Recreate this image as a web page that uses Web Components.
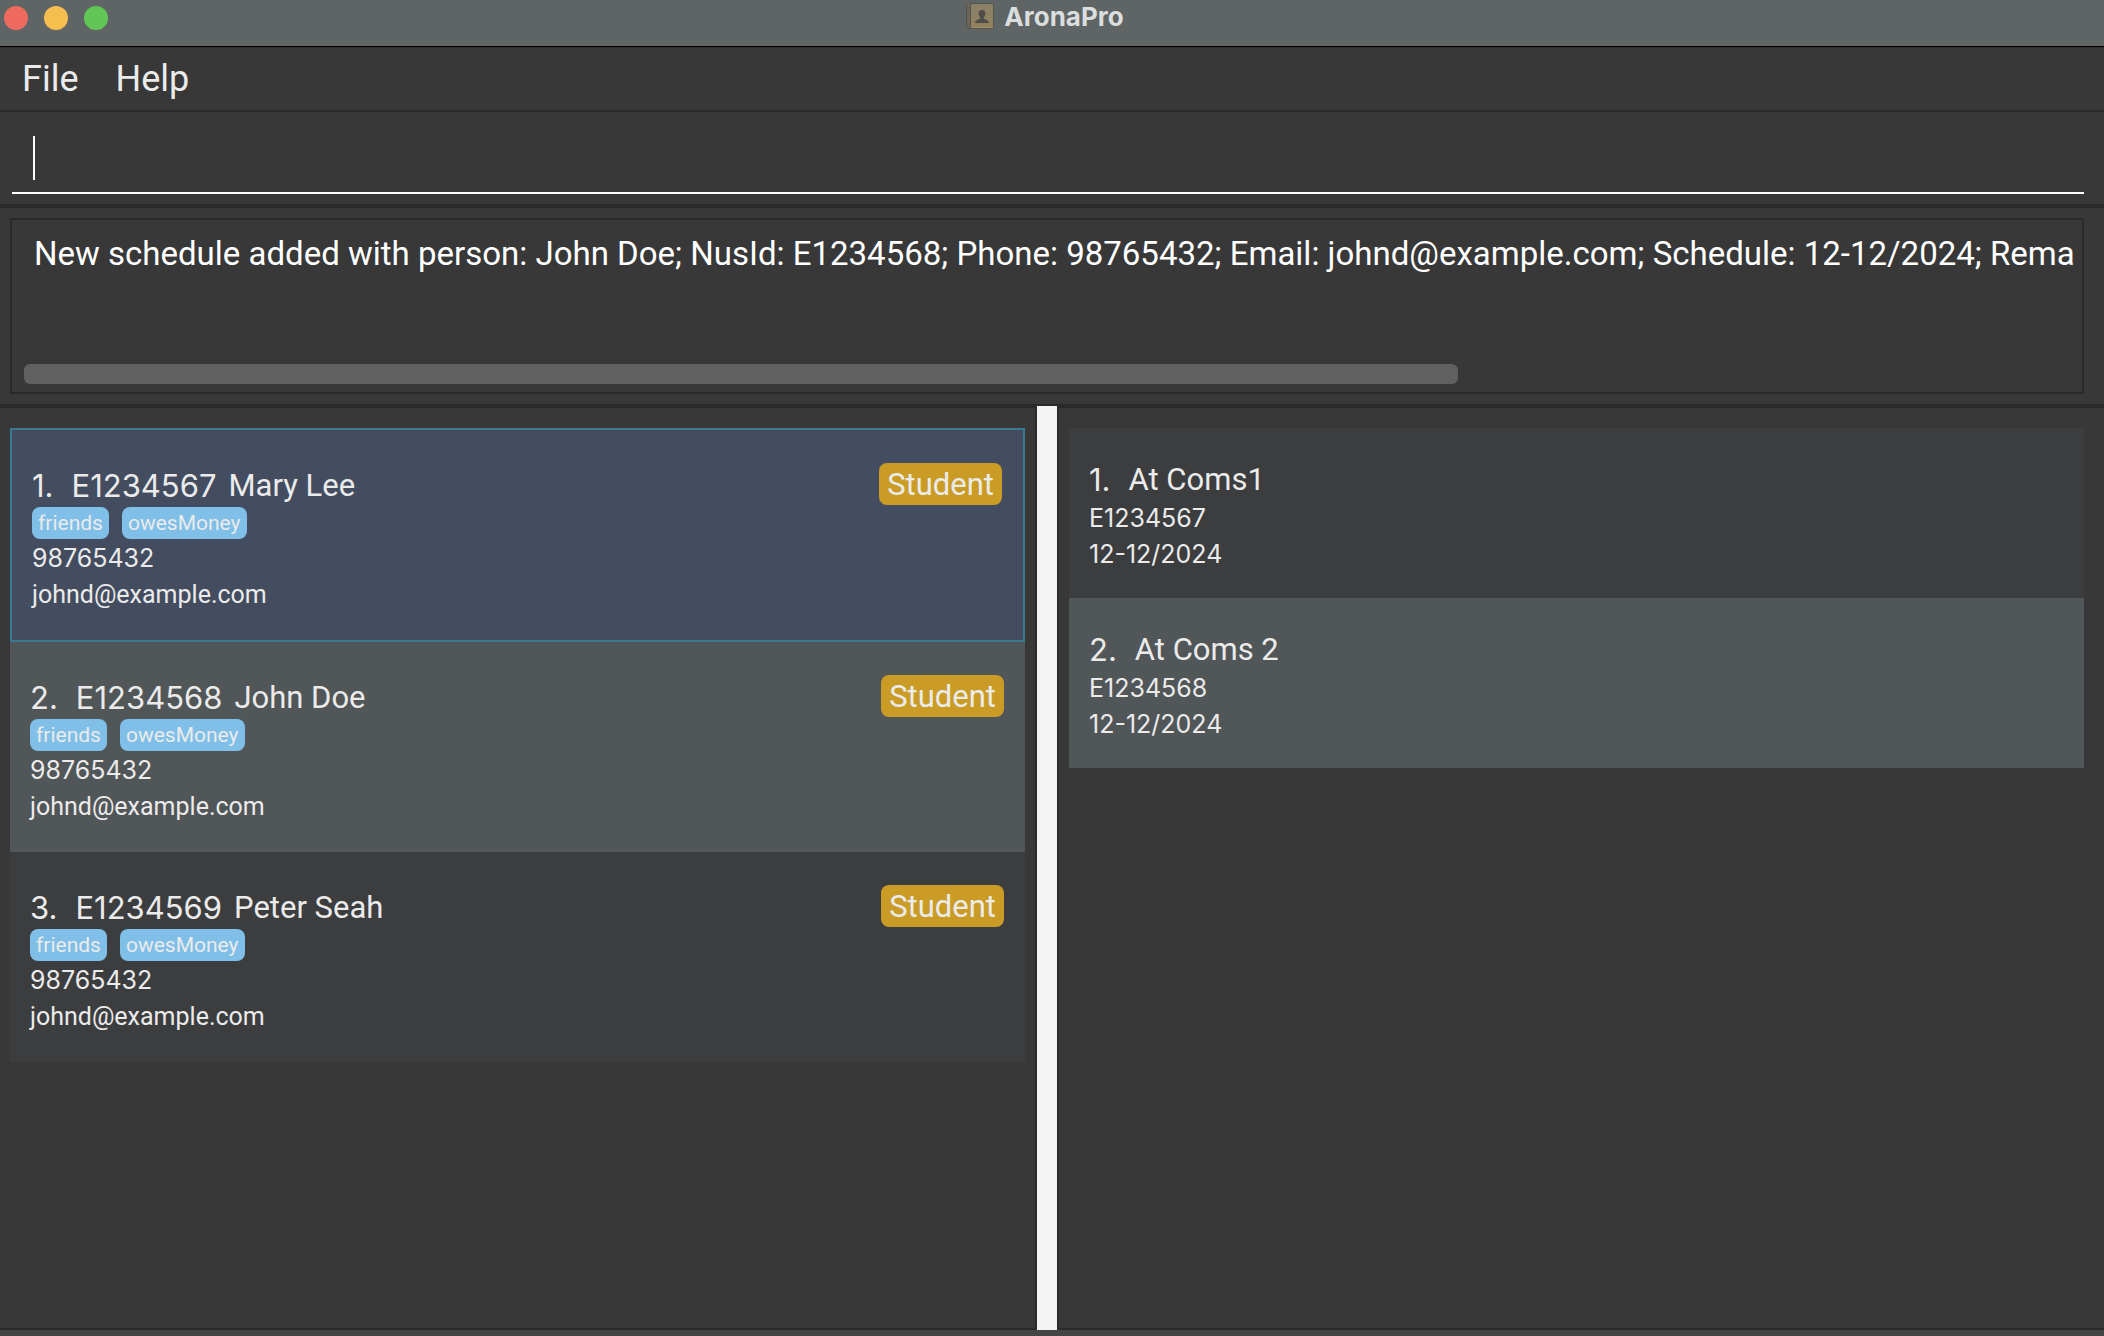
<!DOCTYPE html>
<html lang="en">
<head>
<meta charset="utf-8">
<title>AronaPro</title>
<style>
  html, body { margin: 0; }
  body {
    --bg: #383838;
    --edge: #2a2a2a;
    --text: #ebebeb;
    --sans: Roboto, "Liberation Sans", sans-serif;
    --digits: Inter, "Liberation Sans", sans-serif;
    background: var(--bg);
    color: var(--text);
    font-family: var(--sans);
  }
</style>
</head>
<body>
<arona-app></arona-app>

<template id="t-app">
  <style>
    :host { display: flex; flex-direction: column; min-height: 100vh; }
    arona-split { flex: 1; }
    footer { height: 5px; background: #444; border-bottom: 1px solid #4a4246; }
  </style>
  <arona-titlebar>AronaPro</arona-titlebar>
  <arona-menubar></arona-menubar>
  <arona-command></arona-command>
  <arona-result text="New schedule added with person: John Doe; NusId: E1234568; Phone: 98765432; Email: johnd@example.com; Schedule: 12-12/2024; Rema"></arona-result>
  <arona-split>
    <arona-list slot="left" label="Persons">
      <person-card index="1." nusid="E1234567" name="Mary Lee" role-name="Student" phone="98765432" email="johnd@example.com" tags="friends,owesMoney" selected></person-card>
      <person-card index="2." nusid="E1234568" name="John Doe" role-name="Student" phone="98765432" email="johnd@example.com" tags="friends,owesMoney" alt></person-card>
      <person-card index="3." nusid="E1234569" name="Peter Seah" role-name="Student" phone="98765432" email="johnd@example.com" tags="friends,owesMoney"></person-card>
    </arona-list>
    <arona-list slot="right" label="Schedules">
      <schedule-card index="1." name="At Coms1" nusid="E1234567" date="12-12/2024"></schedule-card>
      <schedule-card index="2." name="At Coms 2" nusid="E1234568" date="12-12/2024" alt></schedule-card>
    </arona-list>
  </arona-split>
  <footer></footer>
</template>

<template id="t-titlebar">
  <style>
    :host {
      display: grid; grid-template-columns: 1fr auto 1fr; align-items: start;
      height: 46px; padding: 0 18px 0 4px;
      background: #5f6464; border-bottom: 1px solid #000;
    }
    .lights { display: flex; gap: 16px; padding-top: 6px; }
    button { width: 24px; height: 24px; padding: 0; border: 0; border-radius: 50%; }
    .close { background: #ee6a5f; }
    .min { background: #f5bf4f; }
    .max { background: #62c655; }
    .title { display: flex; gap: 10px; }
    svg { display: block; padding-top: 2px; }
    h1 { margin: 0; font: 700 26px/34px var(--digits); color: #dadede; }
  </style>
  <div class="lights">
    <button class="close" aria-label="Close"></button>
    <button class="min" aria-label="Minimize"></button>
    <button class="max" aria-label="Zoom"></button>
  </div>
  <div class="title">
    <svg width="28" height="28" viewBox="0 0 28 28" aria-hidden="true">
      <defs>
        <linearGradient id="g" x1="0" y1="0" x2="0" y2="1">
          <stop offset="0" stop-color="#8b8069"/><stop offset="1" stop-color="#91805d"/>
        </linearGradient>
      </defs>
      <rect x="0" y="1" width="28" height="26" rx="2" fill="#53544f"/>
      <rect x="1" y="1" width="3" height="25" rx="1" fill="#6a6459"/>
      <rect x="5" y="2" width="22" height="24" rx="1" fill="url(#g)"/>
      <rect x="5" y="25" width="22" height="1" fill="#a08b62"/>
      <path d="M16 8c2.200 0 3.400 1.500 3.400 3.600 0 1.500-.7 2.900-1.600 3.700v1.500c1.300.7 5.200 1.200 5.200 4.200H9c0-3 3.900-3.500 5.200-4.200v-1.500c-.9-.8-1.600-2.200-1.600-3.700C12.600 9.500 13.800 8 16 8z" fill="#4f4d48"/>
    </svg>
    <h1><slot></slot></h1>
  </div>
</template>

<template id="t-menubar">
  <style>
    :host { display: block; border-top: 1px solid #2e2e2e; border-bottom: 2px solid var(--edge); }
    nav { display: flex; gap: 37px; padding: 9px 22px; }
    button { padding: 0; border: 0; background: none; color: inherit; font: 36px/44px var(--sans); }
  </style>
  <nav aria-label="Main menu"><button>File</button><button>Help</button></nav>
</template>

<template id="t-command">
  <style>
    :host { display: block; padding: 10px 20px 10px 12px; border-bottom: 2px solid var(--edge); }
    .field { display: flex; align-items: center; padding: 14px 21px 12px; border-bottom: 2px solid #fff; }
    .caret { width: 2px; height: 44px; background: #fff; }
    input { flex: 1; height: 44px; padding: 0; border: 0; outline: 0; background: none; color: #fff; font: 33px/40px var(--sans); }
  </style>
  <div class="field"><span class="caret"></span><input type="text" aria-label="Command"></div>
</template>

<template id="t-result">
  <style>
    :host { display: block; padding: 10px 20px 10px 10px; border-top: 2px solid var(--edge); border-bottom: 2px solid var(--edge); }
    .box { display: flex; flex-direction: column; padding: 14px 2px 8px 12px; border: 2px solid var(--edge); }
    textarea {
      height: 130px; padding: 0; margin-left: 10px; border: 0; outline: 0; resize: none; overflow: hidden;
      white-space: pre; background: none; color: #fff; font: 33px/40px var(--sans);
    }
    .track { margin-right: 8px; }
    .thumb { width: 70%; height: 20px; border-radius: 6px; background: #606060; }
  </style>
  <div class="box">
    <textarea readonly wrap="off" aria-label="Result"></textarea>
    <div class="track"><div class="thumb"></div></div>
  </div>
</template>

<template id="t-split">
  <style>
    :host { display: flex; }
    section { flex: 1 1 0; min-width: 0; border: 2px solid var(--edge); }
    .left { padding: 20px 10px; border-left: 0; }
    .right { padding: 20px 20px 20px 10px; border-right: 0; }
    .divider { width: 20px; background: #f4f4f4; }
  </style>
  <section class="left"><slot name="left"></slot></section>
  <div class="divider" role="separator"></div>
  <section class="right"><slot name="right"></slot></section>
</template>

<template id="t-list">
  <style>:host { display: flex; flex-direction: column; }</style>
  <slot></slot>
</template>

<template id="t-person">
  <style>
    :host { display: block; padding: 33px 21px 27px 20px; background: #3c3d3f; }
    :host([alt]) { background: #515658; }
    :host([selected]) { background: #434d5f; border: 2px solid #3a7b91; }
    .head { display: flex; align-items: flex-start; height: 44px; font: 31px/46px var(--sans); }
    .index, .id { font-family: var(--digits); }
    .index { margin-right: 18px; }
    .id { margin-right: 12px; }
    .role { margin-left: auto; padding: 2px 8px 0; border-radius: 8px; line-height: 40px; background: #ca9c26; }
    .tags { display: flex; gap: 13px; margin-bottom: 1px; }
    .tags span { padding: 0 6px; border-radius: 8px; background: #7fbfe8; font: 21px/32px var(--sans); }
    .phone { font: 25px/36px var(--digits); }
    .email { font: 25px/37px var(--sans); }
  </style>
  <div class="head"><span class="index"></span><span class="id"></span><span class="name"></span><span class="role"></span></div>
  <div class="tags"></div>
  <div class="phone"></div>
  <div class="email"></div>
</template>

<template id="t-schedule">
  <style>
    :host { display: block; padding: 31px 20px 26px; background: #3c3d3f; }
    :host([alt]) { background: #515658; }
    .head { display: flex; height: 41px; font: 31px/42px var(--sans); }
    .index { margin-right: 18px; font-family: var(--digits); }
    .id, .date { font: 25px/36px var(--digits); }
  </style>
  <div class="head"><span class="index"></span><span class="name"></span></div>
  <div class="id"></div>
  <div class="date"></div>
</template>

<script>
  class Base extends HTMLElement {
    constructor() {
      super();
      this.attachShadow({ mode: 'open' })
        .append(document.getElementById(this.constructor.template).content.cloneNode(true));
    }
    fill(selector, attribute) {
      this.shadowRoot.querySelector(selector).textContent = this.getAttribute(attribute);
    }
  }
  const define = (tag, template, connected) => customElements.define(tag, class extends Base {
    static template = template;
    connectedCallback() { if (connected) connected.call(this); }
  });

  define('arona-titlebar', 't-titlebar');
  define('arona-menubar', 't-menubar');
  define('arona-command', 't-command');
  define('arona-result', 't-result', function () { this.fill('textarea', 'text'); });
  define('arona-split', 't-split');
  define('arona-list', 't-list', function () {
    this.setAttribute('role', 'list');
    this.setAttribute('aria-label', this.getAttribute('label'));
  });
  define('person-card', 't-person', function () {
    this.setAttribute('role', 'listitem');
    this.fill('.index', 'index');
    this.fill('.id', 'nusid');
    this.fill('.name', 'name');
    this.fill('.role', 'role-name');
    this.fill('.phone', 'phone');
    this.fill('.email', 'email');
    this.shadowRoot.querySelector('.tags').replaceChildren(
      ...this.getAttribute('tags').split(',').map(tag => {
        const chip = document.createElement('span');
        chip.textContent = tag;
        return chip;
      }));
  });
  define('schedule-card', 't-schedule', function () {
    this.setAttribute('role', 'listitem');
    this.fill('.index', 'index');
    this.fill('.name', 'name');
    this.fill('.id', 'nusid');
    this.fill('.date', 'date');
  });
  define('arona-app', 't-app');
</script>
</body>
</html>
